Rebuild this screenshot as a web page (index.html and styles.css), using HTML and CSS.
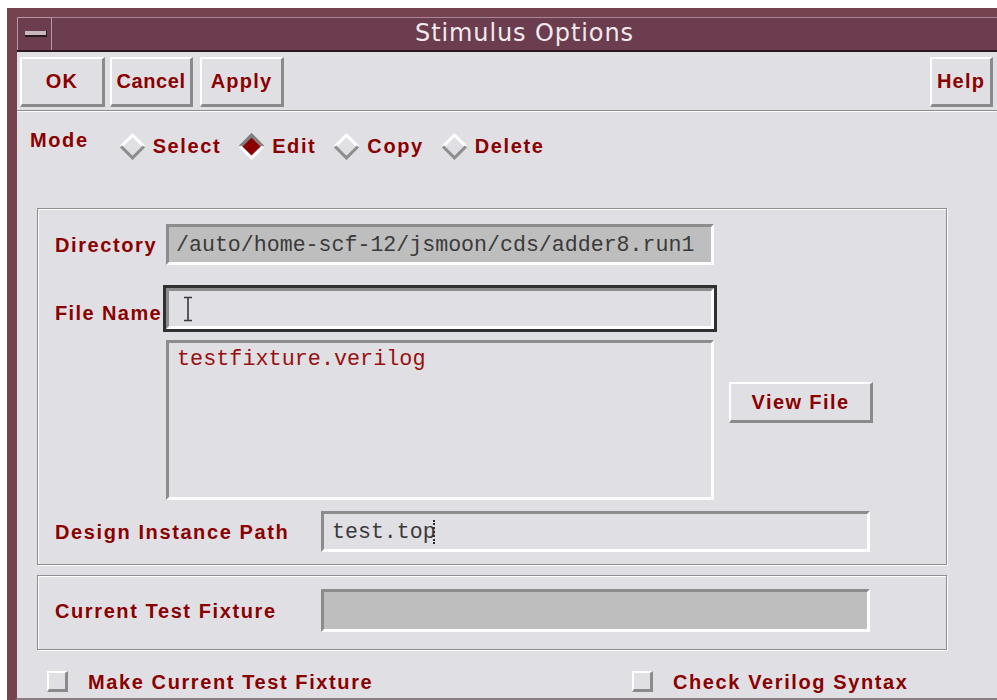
FILE: index.html
```html
<!DOCTYPE html>
<html>
<head>
<meta charset="utf-8">
<title>Stimulus Options</title>
<link rel="stylesheet" href="styles.css">
</head>
<body>
<div class="window">
  <div class="titlebar">
    <div class="winmenu"><span class="winmenu-bar"></span></div>
    <div class="title">Stimulus Options</div>
  </div>
  <div class="client">
    <div class="actions">
      <button class="btn btn-ok">OK</button>
      <button class="btn btn-cancel">Cancel</button>
      <button class="btn btn-apply">Apply</button>
      <button class="btn btn-help">Help</button>
    </div>
    <div class="sep"></div>

    <div class="mode">
      <span class="label mode-label">Mode</span>
      <div class="options">
        <label class="opt">
          <svg class="dia" viewBox="0 0 26 26" width="27" height="27"><path d="M2 13 L13 2 L24 13" fill="none" stroke="#fdfdfd" stroke-width="3"/><path d="M2 13 L13 24 L24 13" fill="none" stroke="#8e8e8e" stroke-width="3"/></svg>
          <span class="label">Select</span>
        </label>
        <label class="opt">
          <svg class="dia" viewBox="0 0 26 26" width="27" height="27"><path d="M13 4 L22 13 L13 22 L4 13 Z" fill="#8a0000"/><path d="M2 13 L13 2 L24 13" fill="none" stroke="#7e7e7e" stroke-width="3"/><path d="M2 13 L13 24 L24 13" fill="none" stroke="#fdfdfd" stroke-width="3"/></svg>
          <span class="label">Edit</span>
        </label>
        <label class="opt">
          <svg class="dia" viewBox="0 0 26 26" width="27" height="27"><path d="M2 13 L13 2 L24 13" fill="none" stroke="#fdfdfd" stroke-width="3"/><path d="M2 13 L13 24 L24 13" fill="none" stroke="#8e8e8e" stroke-width="3"/></svg>
          <span class="label">Copy</span>
        </label>
        <label class="opt">
          <svg class="dia" viewBox="0 0 26 26" width="27" height="27"><path d="M2 13 L13 2 L24 13" fill="none" stroke="#fdfdfd" stroke-width="3"/><path d="M2 13 L13 24 L24 13" fill="none" stroke="#8e8e8e" stroke-width="3"/></svg>
          <span class="label">Delete</span>
        </label>
      </div>
    </div>

    <div class="group group-main">
      <div class="row row-dir">
        <span class="label col-short">Directory</span>
        <div class="field field-gray field-wide">/auto/home-scf-12/jsmoon/cds/adder8.run1</div>
      </div>
      <div class="row row-file">
        <span class="label col-short file-label">File Name</span>
        <div class="field field-wide field-focus">
          <svg class="ibeam" viewBox="0 0 10 26" width="10" height="26"><path d="M1 1.5 H9 M5 1.5 V24.5 M1 24.5 H9" fill="none" stroke="#3a3a3a" stroke-width="1.6"/></svg>
        </div>
      </div>
      <div class="row row-list">
        <span class="col-short"></span>
        <div class="listbox">
          <div class="list-item">testfixture.verilog</div>
        </div>
        <button class="btn btn-view">View File</button>
      </div>
      <div class="row row-design">
        <span class="label col-long">Design Instance Path</span>
        <div class="field field-path">test.top<span class="caret"></span></div>
      </div>
    </div>

    <div class="group group-fixture">
      <div class="row">
        <span class="label col-long">Current Test Fixture</span>
        <div class="field field-gray field-path field-tall"></div>
      </div>
    </div>

    <div class="checks">
      <label class="check check-make"><span class="box"></span><span class="label">Make Current Test Fixture</span></label>
      <label class="check"><span class="box"></span><span class="label">Check Verilog Syntax</span></label>
    </div>
  </div>
</div>
</body>
</html>
```

FILE: styles.css
```css
html, body {
  margin: 0;
  padding: 0;
}

body {
  background: #ffffff;
  width: 997px;
  height: 700px;
  overflow: hidden;
  font-family: "Liberation Sans", Arial, sans-serif;
}

/* window frame */
.window {
  margin: 8px 0 0 7px;
  width: 1020px;
  display: flex;
  flex-direction: column;
  background: #6c3c4c;
  border-top: 9px solid #74434f;
  border-left: 10px solid #74434f;
  border-bottom: 10px solid #8c7c84;
  box-shadow: inset 1px 0 0 #b79aa4;
}

.titlebar {
  height: 33px;
  display: flex;
  background: #6c3d4e;
  border-bottom: 2px solid #2c1820;
  box-shadow: inset 0 1px 0 #a88894;
}

.winmenu {
  width: 35px;
  box-sizing: border-box;
  border-left: 1px solid #b59aa3;
  border-right: 1px solid #b59aa3;
  border-top: 1px solid #b59aa3;
  display: flex;
  align-items: center;
  padding-left: 7px;
}

.winmenu-bar {
  width: 21px;
  height: 4px;
  background: #c8b8bd;
  border-bottom: 2px solid #2a1a20;
  border-right: 1px solid #2a1a20;
}

.title {
  width: 945px;
  text-align: center;
  font-family: "DejaVu Sans", sans-serif;
  font-size: 24px;
  line-height: 33px;
  letter-spacing: 0.9px;
  color: #f1eaec;
}

/* dialog body */
.client {
  height: 646px;
  background: #e0dfe4;
  color: #8a0000;
}

.label {
  font-weight: bold;
  font-size: 20px;
  line-height: 20px;
  letter-spacing: 1.6px;
  color: #8a0000;
  white-space: nowrap;
}

.btn {
  box-sizing: border-box;
  margin: 0;
  padding: 0;
  background: #e0dfe4;
  border-style: solid;
  border-width: 2px 3px 3px 2px;
  border-color: #fdfdfd #8a8a8a #8a8a8a #fdfdfd;
  font-family: "Liberation Sans", Arial, sans-serif;
  font-weight: bold;
  font-size: 20px;
  letter-spacing: 1.2px;
  color: #8a0000;
  display: flex;
  align-items: center;
  justify-content: center;
}

.actions {
  width: 976px;
  box-sizing: border-box;
  height: 58px;
  padding: 5px 0 3px 3px;
  display: flex;
}

.actions .btn {
  height: 50px;
}

.btn-ok { width: 85px; }
.btn-cancel { width: 83px; margin-left: 5px; letter-spacing: 0.6px; }
.btn-apply { width: 84px; margin-left: 7px; }
.btn-help { width: 63px; margin-left: auto; }

.sep {
  height: 0;
  border-top: 1px solid #8c8c8c;
  border-bottom: 1px solid #fbfbfb;
}

/* mode selector */
.mode {
  height: 96px;
  box-sizing: border-box;
  padding: 18px 0 0 13px;
  display: flex;
  align-items: flex-start;
}

.options {
  display: flex;
  margin-left: 30px;
  margin-top: 6px;
}

.opt {
  display: flex;
  align-items: center;
  margin-right: 17px;
  height: 20px;
}

.opt .dia {
  margin-right: 7px;
}

/* group boxes */
.group {
  margin-left: 20px;
  width: 910px;
  box-sizing: border-box;
  border: 1px solid #8e8e8e;
  box-shadow: inset 1px 1px 0 #fdfdfd, 1px 1px 0 #fdfdfd;
  padding-left: 17px;
}

.group-main {
  height: 357px;
  padding-top: 15px;
}

.group-fixture {
  margin-top: 10px;
  height: 75px;
  padding-top: 13px;
}

.row {
  display: flex;
  align-items: center;
}

.row-file { margin-top: 23px; }
.row-list { margin-top: 11px; align-items: flex-start; }
.row-design { margin-top: 11px; }

.col-short { width: 111px; flex: none; }
.col-long { width: 266px; flex: none; }

.file-label {
  padding-top: 9px;
  letter-spacing: 1.4px;
}

.field {
  box-sizing: border-box;
  height: 41px;
  border-style: solid;
  border-width: 3px;
  border-color: #8c8c8c #fdfdfd #fdfdfd #8c8c8c;
  background: #e0dfe4;
  display: flex;
  align-items: center;
  padding-left: 7px;
  font-family: "Liberation Mono", "Courier New", monospace;
  font-size: 21.6px;
  color: #3a3a3a;
  white-space: nowrap;
}

.field-gray {
  background: #bebebe;
}

.field-wide { width: 548px; }

.field-focus {
  outline: 3px solid #303030;
  padding-left: 14px;
}

.field-path {
  width: 549px;
  padding-left: 8px;
}

.field-tall { height: 43px; }

.caret {
  display: inline-block;
  width: 0;
  height: 24px;
  margin-left: -3px;
  border-left: 2px dotted #2a2a2a;
}

.listbox {
  box-sizing: border-box;
  width: 548px;
  height: 160px;
  border-style: solid;
  border-width: 3px;
  border-color: #8c8c8c #fdfdfd #fdfdfd #8c8c8c;
  padding: 5px 0 0 8px;
}

.list-item {
  font-family: "Liberation Mono", "Courier New", monospace;
  font-size: 21.8px;
  line-height: 24px;
  color: #981010;
}

.btn-view {
  width: 144px;
  height: 41px;
  margin-left: 15px;
  margin-top: 42px;
  letter-spacing: 1.4px;
}

/* toggles */
.checks {
  margin-top: 21px;
  padding-left: 30px;
  display: flex;
}

.check {
  display: flex;
  align-items: center;
}

.check-make { width: 585px; }

.box {
  width: 21px;
  height: 21px;
  box-sizing: border-box;
  border-style: solid;
  border-width: 2px 3px 3px 2px;
  border-color: #fdfdfd #8a8a8a #8a8a8a #fdfdfd;
  margin-right: 20px;
}
```
